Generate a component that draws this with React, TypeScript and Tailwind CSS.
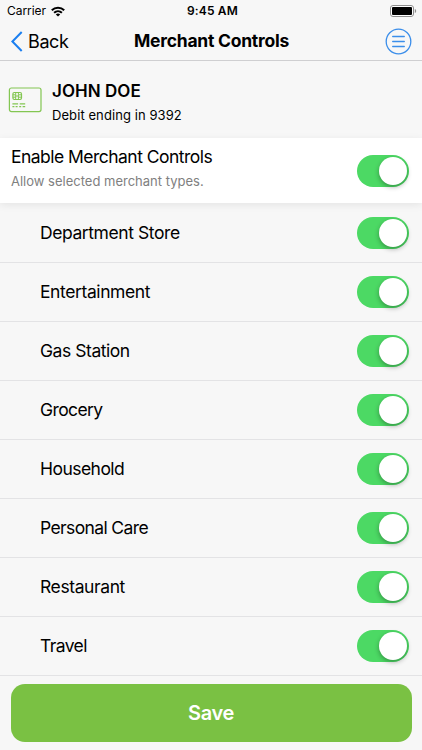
import { useState } from 'react';
import clsx from 'clsx';

const merchantTypes = [
  { name: 'Department Store', spacing: 'tracking-[-0.42px]' },
  { name: 'Entertainment', spacing: 'tracking-[-0.4px]' },
  { name: 'Gas Station', spacing: 'tracking-[-0.45px]' },
  { name: 'Grocery', spacing: 'tracking-[-0.6px]' },
  { name: 'Household', spacing: 'tracking-[-0.54px]' },
  { name: 'Personal Care', spacing: 'tracking-[-0.62px]' },
  { name: 'Restaurant', spacing: 'tracking-[-0.4px]' },
  { name: 'Travel', spacing: 'tracking-[-0.6px]' },
];

interface ToggleProps {
  label: string;
  checked: boolean;
  onChange: () => void;
}

function Toggle({ label, checked, onChange }: ToggleProps) {
  return (
    <button
      type="button"
      role="switch"
      aria-label={label}
      aria-checked={checked}
      onClick={onChange}
      className={clsx(
        'flex h-8 w-[52px] shrink-0 items-center rounded-full px-[1.5px]',
        checked ? 'justify-end bg-[#4cd964]' : 'justify-start bg-[#e5e5ea]'
      )}
    >
      <span className="size-7 rounded-full bg-white shadow-[0_2px_5px_rgba(0,0,0,0.32)]" />
    </button>
  );
}

function StatusBar() {
  return (
    <div className="grid h-[22px] grid-cols-3 items-center pl-[7px] pr-[5px] text-[12px]">
      <div className="flex items-center gap-[5px]">
        <span className="tracking-[-0.05px]">Carrier</span>
        <svg width="14" height="11" viewBox="0 0 14 11" fill="none" stroke="#000" strokeWidth="2">
          <path d="M0.8 4.3C4.2 0.9 9.8 0.9 13.2 4.3" />
          <path d="M3.1 6.7C5.3 4.6 8.7 4.6 10.9 6.7" />
          <path d="M7 10.6L4.8 8.4C6.1 7.2 7.9 7.2 9.2 8.4Z" fill="#000" stroke="none" />
        </svg>
      </div>
      <span className="pl-px text-center font-semibold tracking-[0.15px]">9:45 AM</span>
      <svg className="justify-self-end" width="27" height="12" viewBox="0 0 27 12">
        <rect x="0.5" y="0.5" width="23" height="11" rx="2.5" fill="#fff" stroke="#8e8e8e" />
        <rect x="2" y="2" width="20" height="8" rx="1" fill="#000" />
        <path d="M24.8 4C26.6 4.5 26.6 7.5 24.8 8Z" fill="#8e8e8e" />
      </svg>
    </div>
  );
}

function NavBar() {
  return (
    <div className="grid h-[39px] grid-cols-[1fr_auto_1fr] items-center border-b border-[#cfcfd1] pl-[11px] pr-[10px]">
      <button type="button" className="flex items-center gap-[5px] text-[18px]">
        <svg width="12" height="21" viewBox="0 0 12 21" fill="none" stroke="#1b7ff0" strokeWidth="2">
          <path d="M10.7 1L1.4 10.5L10.7 20" />
        </svg>
        <span className="pt-px tracking-[-0.4px]">Back</span>
      </button>
      <h1 className="text-[17.5px] font-bold tracking-[-0.25px]">Merchant Controls</h1>
      <button type="button" aria-label="Menu" className="justify-self-end">
        <svg width="27" height="27" viewBox="0 0 27 27" fill="none" stroke="#3b8eea" strokeWidth="1.3">
          <circle cx="13.5" cy="13.5" r="12.3" />
          <path d="M7.7 8.5H19.3M7.7 13.5H19.3M7.7 18.5H19.3" strokeLinecap="round" />
        </svg>
      </button>
    </div>
  );
}

function CardIcon() {
  return (
    <svg width="34" height="26" viewBox="0 0 34 26" fill="none" stroke="#83c652">
      <rect x="1.4" y="1" width="31.6" height="23.6" rx="2" strokeWidth="1.2" />
      <rect x="4.9" y="5.5" width="8.6" height="7" rx="1.4" strokeWidth="1.2" />
      <path d="M4.9 7.8H7.7V12.5M4.9 10.2H7.7M7.7 5.5V7.8M13.5 7.8H10.4V5.5M10.4 8V12.5M13.5 10.2H10.4M10.4 9H7.7" strokeWidth="1" />
      <path d="M4.4 16.8H10.1M11.7 16.8H17.2" strokeWidth="1.2" />
      <path d="M4.4 19.6H6.4M7.6 19.6H9.6M11.2 19.6H13.2M14.6 19.6H17.2" strokeWidth="1.2" />
    </svg>
  );
}

export default function App() {
  const [enabled, setEnabled] = useState(true);
  const [blocked, setBlocked] = useState<string[]>([]);

  const toggleType = (name: string) => {
    setBlocked((prev) => (prev.includes(name) ? prev.filter((n) => n !== name) : [...prev, name]));
  };

  return (
    <div className="flex h-[750px] w-full flex-col bg-[#f7f7f7] font-['Inter','Liberation_Sans',sans-serif] text-black">
      <StatusBar />
      <NavBar />

      <div className="flex h-[77px] items-center gap-[10px] pl-2">
        <CardIcon />
        <div className="pt-[7px]">
          <p className="text-[17px] font-semibold leading-6 tracking-[0.05px]">JOHN DOE</p>
          <p className="text-[13px] leading-6 tracking-[0.08px]">Debit ending in 9392</p>
        </div>
      </div>

      <div className="relative flex h-[65px] items-center justify-between bg-white pl-[11px] pr-[13.5px] shadow-[0_2px_8px_rgba(0,0,0,0.08)]">
        <div className="pb-[3px]">
          <p className="text-[17.5px] leading-6 tracking-[-0.53px]">Enable Merchant Controls</p>
          <p className="text-[13px] leading-6 text-[#808080]">Allow selected merchant types.</p>
        </div>
        <Toggle label="Enable Merchant Controls" checked={enabled} onChange={() => setEnabled(!enabled)} />
      </div>

      <ul className="pt-px">
        {merchantTypes.map(({ name, spacing }) => (
          <li key={name} className="flex h-[59px] items-center justify-between border-b border-[#e3e3e5] pl-10 pr-[13.5px]">
            <span className={clsx('text-[17.5px]', spacing)}>{name}</span>
            <Toggle label={name} checked={enabled && !blocked.includes(name)} onChange={() => toggleType(name)} />
          </li>
        ))}
      </ul>

      <div className="px-[10.5px] pt-[7.5px]">
        <button
          type="button"
          className="h-[58px] w-full rounded-[14px] bg-[#7ac143] pt-px text-[20px] font-semibold tracking-[-0.4px] text-white"
        >
          Save
        </button>
      </div>
    </div>
  );
}
